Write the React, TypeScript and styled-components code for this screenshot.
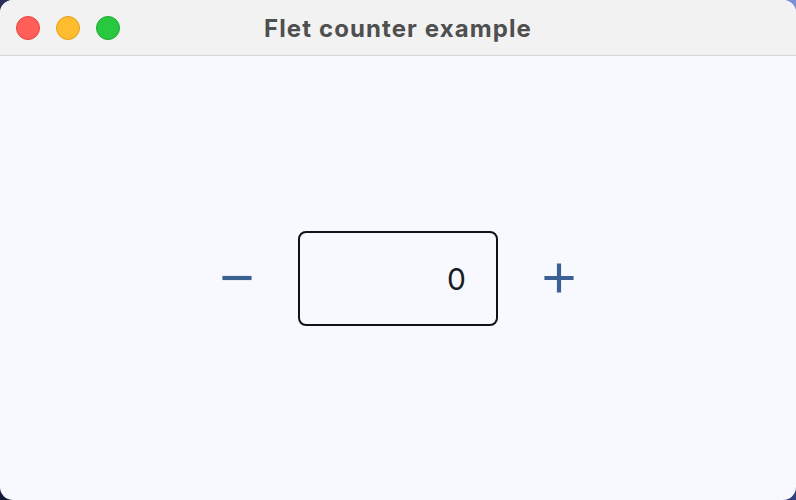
import React from "react";
import styled, { createGlobalStyle } from "styled-components";

const GlobalStyle = createGlobalStyle`
  html, body {
    margin: 0;
    padding: 0;
    width: 796px;
    height: 500px;
    overflow: hidden;
  }
  body {
    background:
      radial-gradient(circle at 100% 0%, #7b8fd6 0%, #4a5fb8 40%, transparent 70%),
      radial-gradient(circle at 0% 0%, #2a2f5a 0%, #141633 60%),
      #16194a;
  }
`;

const Window = styled.div`
  width: 796px;
  height: 500px;
  border-radius: 13px;
  overflow: hidden;
  background: #f8f9fe;
  display: flex;
  flex-direction: column;
  font-family: Inter, "Liberation Sans", sans-serif;
`;

const TitleBar = styled.div`
  height: 55px;
  flex: 0 0 auto;
  background: #f2f2f2;
  border-bottom: 1px solid #d5d5d9;
  display: grid;
  grid-template-columns: 1fr auto 1fr;
  align-items: center;
  padding: 0 16px;
`;

const Lights = styled.div`
  display: flex;
  gap: 16px;
  align-items: center;
`;

const Light = styled.span<{ $fill: string; $ring: string }>`
  width: 24px;
  height: 24px;
  box-sizing: border-box;
  border-radius: 50%;
  background: ${(p) => p.$fill};
  border: 1px solid ${(p) => p.$ring};
`;

const Title = styled.div`
  font-size: 24px;
  font-weight: 700;
  color: #4f4f4f;
  letter-spacing: 1.1px;
  margin-top: 1px;
`;

const Content = styled.div`
  flex: 1;
  display: flex;
  align-items: center;
  justify-content: center;
  gap: 36px;
`;

const IconButton = styled.button`
  width: 50px;
  height: 50px;
  padding: 0;
  border: none;
  background: transparent;
  color: #3a6191;
  display: flex;
  align-items: center;
  justify-content: center;
  cursor: pointer;
`;

const Field = styled.div`
  width: 200px;
  height: 95px;
  box-sizing: border-box;
  border: 2px solid #111214;
  border-radius: 8px;
  display: flex;
  align-items: center;
  justify-content: flex-end;
  padding: 0 30px 0 0;
  font-size: 30px;
  color: #1b1c1f;
  margin-top: 1px;
`;

const RemoveIcon = () => (
  <svg width="50" height="50" viewBox="0 0 24 24" fill="currentColor">
    <path d="M19 13H5v-2h14v2z" />
  </svg>
);

const AddIcon = () => (
  <svg width="50" height="50" viewBox="0 0 24 24" fill="currentColor">
    <path d="M19 13h-6v6h-2v-6H5v-2h6V5h2v6h6v2z" />
  </svg>
);

export default function App() {
  const [count, setCount] = React.useState(0);
  return (
    <>
      <GlobalStyle />
      <Window>
        <TitleBar>
          <Lights>
            <Light $fill="#ff5f57" $ring="#e2463f" />
            <Light $fill="#febc2e" $ring="#dfa123" />
            <Light $fill="#28c840" $ring="#1daa2c" />
          </Lights>
          <Title>Flet counter example</Title>
          <div />
        </TitleBar>
        <Content>
          <IconButton onClick={() => setCount((c) => c - 1)} aria-label="minus">
            <RemoveIcon />
          </IconButton>
          <Field>{count}</Field>
          <IconButton onClick={() => setCount((c) => c + 1)} aria-label="plus">
            <AddIcon />
          </IconButton>
        </Content>
      </Window>
    </>
  );
}
